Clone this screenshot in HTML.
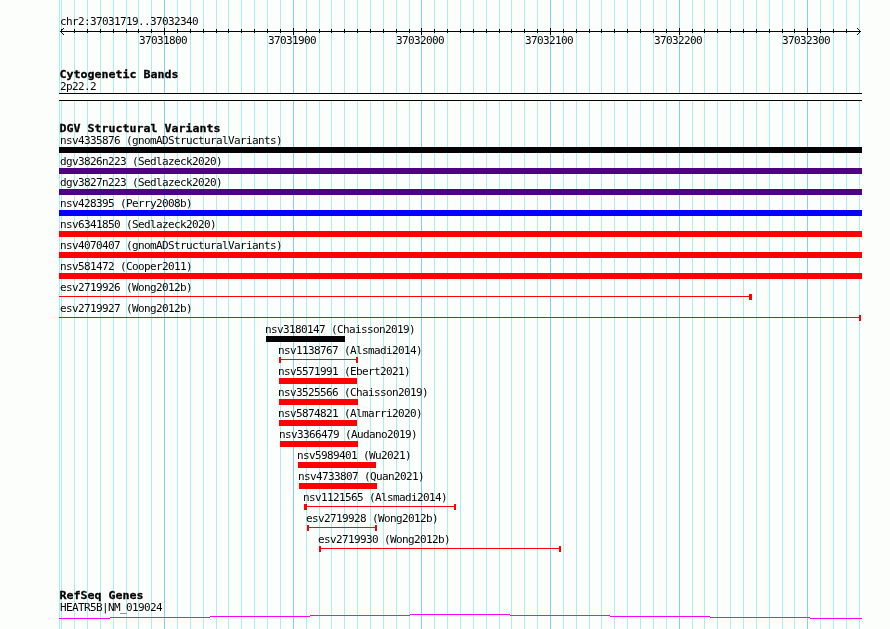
<!DOCTYPE html>
<html lang="en"><head><meta charset="utf-8"><title>chr2:37031719..37032340</title>
<style>
html,body{margin:0;padding:0;background:#fcfefc;}
#p{will-change:transform;position:relative;width:890px;height:629px;overflow:hidden;background:#fcfefc;}
#p i,#p b,#p span,#p u{position:absolute;display:block;font-style:normal;text-decoration:none;}
.g{top:0;width:1px;height:629px;background:#aceeec}
.G{top:0;width:1px;height:629px;background:#84ceec}
.t{font:11px/12px "DejaVu Sans Mono","Liberation Mono",monospace;color:#040204;white-space:pre;letter-spacing:-0.623px;}
.h{font:bold 11.63px/14px "DejaVu Sans Mono","Liberation Mono",monospace;color:#040204;white-space:pre;letter-spacing:0px;transform-origin:0 0;transform:scaleY(0.945);-webkit-text-stroke:0.3px #000;font-weight:bold;}
.k{background:#040204}.r{background:#fc0204}.v{background:#4c0284}.bl{background:#0402fc}.m{background:#fc02fc}
</style></head><body><div id="p">
<i class="g" style="left:59px"></i><i class="g" style="left:61px"></i><i class="g" style="left:74px"></i><i class="g" style="left:87px"></i><i class="g" style="left:100px"></i><i class="g" style="left:113px"></i><i class="g" style="left:126px"></i><i class="g" style="left:138px"></i><i class="g" style="left:151px"></i><i class="G" style="left:164px"></i><i class="g" style="left:177px"></i><i class="g" style="left:190px"></i><i class="g" style="left:203px"></i><i class="g" style="left:216px"></i><i class="g" style="left:228px"></i><i class="g" style="left:241px"></i><i class="g" style="left:254px"></i><i class="g" style="left:267px"></i><i class="g" style="left:280px"></i><i class="G" style="left:293px"></i><i class="g" style="left:306px"></i><i class="g" style="left:319px"></i><i class="g" style="left:331px"></i><i class="g" style="left:344px"></i><i class="g" style="left:357px"></i><i class="g" style="left:370px"></i><i class="g" style="left:383px"></i><i class="g" style="left:396px"></i><i class="g" style="left:409px"></i><i class="G" style="left:421px"></i><i class="g" style="left:434px"></i><i class="g" style="left:447px"></i><i class="g" style="left:460px"></i><i class="g" style="left:473px"></i><i class="g" style="left:486px"></i><i class="g" style="left:499px"></i><i class="g" style="left:511px"></i><i class="g" style="left:524px"></i><i class="g" style="left:537px"></i><i class="G" style="left:550px"></i><i class="g" style="left:563px"></i><i class="g" style="left:576px"></i><i class="g" style="left:589px"></i><i class="g" style="left:601px"></i><i class="g" style="left:614px"></i><i class="g" style="left:627px"></i><i class="g" style="left:640px"></i><i class="g" style="left:653px"></i><i class="g" style="left:666px"></i><i class="G" style="left:679px"></i><i class="g" style="left:692px"></i><i class="g" style="left:704px"></i><i class="g" style="left:717px"></i><i class="g" style="left:730px"></i><i class="g" style="left:743px"></i><i class="g" style="left:756px"></i><i class="g" style="left:769px"></i><i class="g" style="left:782px"></i><i class="g" style="left:794px"></i><i class="G" style="left:807px"></i><i class="g" style="left:820px"></i><i class="g" style="left:833px"></i><i class="g" style="left:846px"></i><i class="g" style="left:859px"></i>
<i class="k" style="left:60px;top:31px;width:801px;height:1px"></i><i class="k" style="left:61px;top:29px;width:1px;height:4px"></i><i class="k" style="left:74px;top:29px;width:1px;height:4px"></i><i class="k" style="left:87px;top:29px;width:1px;height:4px"></i><i class="k" style="left:100px;top:29px;width:1px;height:4px"></i><i class="k" style="left:113px;top:29px;width:1px;height:4px"></i><i class="k" style="left:126px;top:29px;width:1px;height:4px"></i><i class="k" style="left:138px;top:29px;width:1px;height:4px"></i><i class="k" style="left:151px;top:29px;width:1px;height:4px"></i><i class="k" style="left:164px;top:28px;width:1px;height:7px"></i><i class="k" style="left:177px;top:29px;width:1px;height:4px"></i><i class="k" style="left:190px;top:29px;width:1px;height:4px"></i><i class="k" style="left:203px;top:29px;width:1px;height:4px"></i><i class="k" style="left:216px;top:29px;width:1px;height:4px"></i><i class="k" style="left:228px;top:29px;width:1px;height:4px"></i><i class="k" style="left:241px;top:29px;width:1px;height:4px"></i><i class="k" style="left:254px;top:29px;width:1px;height:4px"></i><i class="k" style="left:267px;top:29px;width:1px;height:4px"></i><i class="k" style="left:280px;top:29px;width:1px;height:4px"></i><i class="k" style="left:293px;top:28px;width:1px;height:7px"></i><i class="k" style="left:306px;top:29px;width:1px;height:4px"></i><i class="k" style="left:319px;top:29px;width:1px;height:4px"></i><i class="k" style="left:331px;top:29px;width:1px;height:4px"></i><i class="k" style="left:344px;top:29px;width:1px;height:4px"></i><i class="k" style="left:357px;top:29px;width:1px;height:4px"></i><i class="k" style="left:370px;top:29px;width:1px;height:4px"></i><i class="k" style="left:383px;top:29px;width:1px;height:4px"></i><i class="k" style="left:396px;top:29px;width:1px;height:4px"></i><i class="k" style="left:409px;top:29px;width:1px;height:4px"></i><i class="k" style="left:421px;top:28px;width:1px;height:7px"></i><i class="k" style="left:434px;top:29px;width:1px;height:4px"></i><i class="k" style="left:447px;top:29px;width:1px;height:4px"></i><i class="k" style="left:460px;top:29px;width:1px;height:4px"></i><i class="k" style="left:473px;top:29px;width:1px;height:4px"></i><i class="k" style="left:486px;top:29px;width:1px;height:4px"></i><i class="k" style="left:499px;top:29px;width:1px;height:4px"></i><i class="k" style="left:511px;top:29px;width:1px;height:4px"></i><i class="k" style="left:524px;top:29px;width:1px;height:4px"></i><i class="k" style="left:537px;top:29px;width:1px;height:4px"></i><i class="k" style="left:550px;top:28px;width:1px;height:7px"></i><i class="k" style="left:563px;top:29px;width:1px;height:4px"></i><i class="k" style="left:576px;top:29px;width:1px;height:4px"></i><i class="k" style="left:589px;top:29px;width:1px;height:4px"></i><i class="k" style="left:601px;top:29px;width:1px;height:4px"></i><i class="k" style="left:614px;top:29px;width:1px;height:4px"></i><i class="k" style="left:627px;top:29px;width:1px;height:4px"></i><i class="k" style="left:640px;top:29px;width:1px;height:4px"></i><i class="k" style="left:653px;top:29px;width:1px;height:4px"></i><i class="k" style="left:666px;top:29px;width:1px;height:4px"></i><i class="k" style="left:679px;top:28px;width:1px;height:7px"></i><i class="k" style="left:692px;top:29px;width:1px;height:4px"></i><i class="k" style="left:704px;top:29px;width:1px;height:4px"></i><i class="k" style="left:717px;top:29px;width:1px;height:4px"></i><i class="k" style="left:730px;top:29px;width:1px;height:4px"></i><i class="k" style="left:743px;top:29px;width:1px;height:4px"></i><i class="k" style="left:756px;top:29px;width:1px;height:4px"></i><i class="k" style="left:769px;top:29px;width:1px;height:4px"></i><i class="k" style="left:782px;top:29px;width:1px;height:4px"></i><i class="k" style="left:794px;top:29px;width:1px;height:4px"></i><i class="k" style="left:807px;top:28px;width:1px;height:7px"></i><i class="k" style="left:820px;top:29px;width:1px;height:4px"></i><i class="k" style="left:833px;top:29px;width:1px;height:4px"></i><i class="k" style="left:846px;top:29px;width:1px;height:4px"></i><i class="k" style="left:61px;top:30px;width:1px;height:1px"></i><i class="k" style="left:61px;top:32px;width:1px;height:1px"></i><i class="k" style="left:859px;top:30px;width:1px;height:1px"></i><i class="k" style="left:859px;top:32px;width:1px;height:1px"></i><i class="k" style="left:62px;top:29px;width:1px;height:1px"></i><i class="k" style="left:62px;top:33px;width:1px;height:1px"></i><i class="k" style="left:858px;top:29px;width:1px;height:1px"></i><i class="k" style="left:858px;top:33px;width:1px;height:1px"></i><i class="k" style="left:63px;top:28px;width:1px;height:1px"></i><i class="k" style="left:63px;top:34px;width:1px;height:1px"></i><i class="k" style="left:857px;top:28px;width:1px;height:1px"></i><i class="k" style="left:857px;top:34px;width:1px;height:1px"></i>
<span class="t" style="left:60px;top:16px">chr2:37031719..37032340</span><span class="t" style="left:133px;top:35px;width:60px;text-align:center">37031800</span><span class="t" style="left:262px;top:35px;width:60px;text-align:center">37031900</span><span class="t" style="left:390px;top:35px;width:60px;text-align:center">37032000</span><span class="t" style="left:519px;top:35px;width:60px;text-align:center">37032100</span><span class="t" style="left:648px;top:35px;width:60px;text-align:center">37032200</span><span class="t" style="left:776px;top:35px;width:60px;text-align:center">37032300</span>
<b class="h" style="left:59.5px;top:68px">Cytogenetic Bands</b><span class="t" style="left:60px;top:81px">2p22.2</span><i style="left:59px;top:93px;width:803px;height:6px;background:#fcfefc;border-top:1px solid #040204;border-bottom:1px solid #040204"></i>
<b class="h" style="left:59.5px;top:122px">DGV Structural Variants</b><span class="t" style="left:60px;top:135px">nsv4335876 (gnomADStructuralVariants)</span><i class="k" style="left:59px;top:147px;width:803px;height:6px"></i>
<span class="t" style="left:60px;top:156px">dgv3826n223 (Sedlazeck2020)</span><i class="v" style="left:59px;top:168px;width:803px;height:6px"></i>
<span class="t" style="left:60px;top:177px">dgv3827n223 (Sedlazeck2020)</span><i class="v" style="left:59px;top:189px;width:803px;height:6px"></i>
<span class="t" style="left:60px;top:198px">nsv428395 (Perry2008b)</span><i class="bl" style="left:59px;top:210px;width:803px;height:6px"></i>
<span class="t" style="left:60px;top:219px">nsv6341850 (Sedlazeck2020)</span><i class="r" style="left:59px;top:231px;width:803px;height:6px"></i>
<span class="t" style="left:60px;top:240px">nsv4070407 (gnomADStructuralVariants)</span><i class="r" style="left:59px;top:252px;width:803px;height:6px"></i>
<span class="t" style="left:60px;top:261px">nsv581472 (Cooper2011)</span><i class="r" style="left:59px;top:273px;width:803px;height:6px"></i>
<span class="t" style="left:60px;top:282px">esv2719926 (Wong2012b)</span><i class="r" style="left:59px;top:296px;width:693px;height:1px"></i><i class="r" style="left:749px;top:294px;width:3px;height:6px"></i>
<span class="t" style="left:60px;top:303px">esv2719927 (Wong2012b)</span><i class="r" style="left:59px;top:317px;width:802px;height:1px"></i><i class="r" style="left:859px;top:315px;width:2px;height:6px"></i>
<span class="t" style="left:265px;top:324px">nsv3180147 (Chaisson2019)</span><i class="k" style="left:266px;top:336px;width:79px;height:6px"></i>
<span class="t" style="left:278px;top:345px">nsv1138767 (Alsmadi2014)</span><i class="r" style="left:279px;top:359px;width:79px;height:1px"></i><i class="r" style="left:279px;top:357px;width:2px;height:6px"></i><i class="r" style="left:356px;top:357px;width:2px;height:6px"></i>
<span class="t" style="left:278px;top:366px">nsv5571991 (Ebert2021)</span><i class="r" style="left:279px;top:378px;width:78px;height:6px"></i>
<span class="t" style="left:278px;top:387px">nsv3525566 (Chaisson2019)</span><i class="r" style="left:279px;top:399px;width:79px;height:6px"></i>
<span class="t" style="left:278px;top:408px">nsv5874821 (Almarri2020)</span><i class="r" style="left:279px;top:420px;width:78px;height:6px"></i>
<span class="t" style="left:279px;top:429px">nsv3366479 (Audano2019)</span><i class="r" style="left:280px;top:441px;width:78px;height:6px"></i>
<span class="t" style="left:297px;top:450px">nsv5989401 (Wu2021)</span><i class="r" style="left:298px;top:462px;width:78px;height:6px"></i>
<span class="t" style="left:298px;top:471px">nsv4733807 (Quan2021)</span><i class="r" style="left:299px;top:483px;width:78px;height:6px"></i>
<span class="t" style="left:303px;top:492px">nsv1121565 (Alsmadi2014)</span><i class="r" style="left:304px;top:506px;width:152px;height:1px"></i><i class="r" style="left:304px;top:504px;width:3px;height:6px"></i><i class="r" style="left:454px;top:504px;width:2px;height:6px"></i>
<span class="t" style="left:306px;top:513px">esv2719928 (Wong2012b)</span><i class="r" style="left:307px;top:527px;width:70px;height:1px"></i><i class="r" style="left:307px;top:525px;width:2px;height:6px"></i><i class="r" style="left:375px;top:525px;width:2px;height:6px"></i>
<span class="t" style="left:318px;top:534px">esv2719930 (Wong2012b)</span><i class="r" style="left:319px;top:548px;width:242px;height:1px"></i><i class="r" style="left:319px;top:546px;width:2px;height:6px"></i><i class="r" style="left:559px;top:546px;width:2px;height:6px"></i>
<b class="h" style="left:59.5px;top:589px">RefSeq Genes</b><span class="t" style="left:60px;top:602px">HEATR5B|NM_019024</span><i class="m" style="left:59px;top:618px;width:51px;height:1px"></i><i class="m" style="left:110px;top:617px;width:100px;height:1px"></i><i class="m" style="left:210px;top:616px;width:100px;height:1px"></i><i class="m" style="left:310px;top:615px;width:100px;height:1px"></i><i class="m" style="left:410px;top:614px;width:100px;height:1px"></i><i class="m" style="left:510px;top:615px;width:100px;height:1px"></i><i class="m" style="left:610px;top:616px;width:100px;height:1px"></i><i class="m" style="left:710px;top:617px;width:100px;height:1px"></i><i class="m" style="left:810px;top:618px;width:52px;height:1px"></i>
</div></body></html>
